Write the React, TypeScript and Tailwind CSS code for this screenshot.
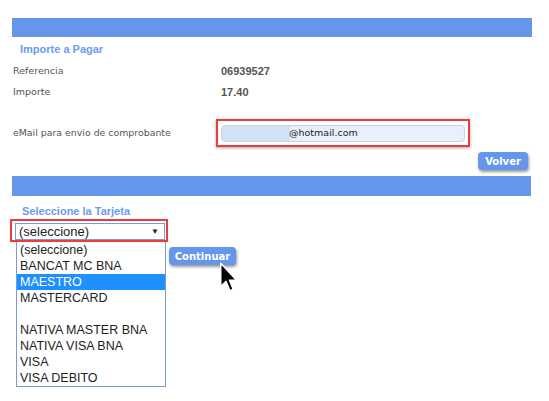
import React from 'react'

const items = [
  '(seleccione)',
  'BANCAT MC BNA',
  'MAESTRO',
  'MASTERCARD',
  '',
  'NATIVA MASTER BNA',
  'NATIVA VISA BNA',
  'VISA',
  'VISA DEBITO',
]

function Cursor() {
  return (
    <svg width="18" height="31" viewBox="0 0 12 20" className="absolute left-[220px] top-[262px]">
      <path d="M0.5 0.5 L0.5 16 L4 12.6 L6.6 18.8 L8.8 17.8 L6.3 11.8 L11 11.8 Z" fill="#000" stroke="#fff" strokeWidth="1" strokeLinejoin="round" />
    </svg>
  )
}

export default function App() {
  return (
    <div className="relative w-[549px] h-[401px] bg-white overflow-hidden font-['DejaVu_Sans',sans-serif] text-[#555]">
      <div className="pt-[18px]">
        <div className="ml-[12px] w-[520px] h-[19px] bg-[#6596ec]"></div>

        <div className="ml-[20px] h-[22px] mt-[1px] flex items-center text-[11px] font-bold text-[#6b9cf0] font-['Liberation_Sans',sans-serif]">
          Importe a Pagar
        </div>

        <div className="flex items-center h-[22px] text-[9.5px]">
          <span className="ml-[13px] w-[208px]">Referencia</span>
          <span className="text-[11px] font-bold text-[#555] font-['Liberation_Sans',sans-serif]">06939527</span>
        </div>
        <div className="flex items-center h-[21px] text-[9.5px]">
          <span className="ml-[13px] w-[208px]">Importe</span>
          <span className="text-[11px] font-bold text-[#555] font-['Liberation_Sans',sans-serif]">17.40</span>
        </div>

        <div className="flex items-center h-[28px] mt-[16px] text-[9.4px]">
          <span className="ml-[13px] w-[203px]">eMail para envio de comprobante</span>
          <div className="w-[254px] h-[28px] border-2 border-[#ee3b3b] shadow-[0_1px_3px_rgba(0,0,0,0.35)] flex items-center px-[3px]">
            <div className="w-full h-[17px] rounded-[4px] border border-[#c9d3e0] bg-[#e8f0fe] flex items-center overflow-hidden">
              <div className="w-[68px] h-full bg-[#d0e2f4]"></div>
              <span className="text-[9.5px] text-[#222] -ml-[1px]">@hotmail.com</span>
            </div>
          </div>
        </div>

        <div className="flex justify-end w-[528px] mt-[5px]">
          <button className="w-[50px] h-[18px] rounded-[4px] bg-[#6596ec] text-white text-[10px] font-bold shadow-[1px_2px_3px_rgba(0,0,0,0.4)] flex items-center justify-center">
            Volver
          </button>
        </div>

        <div className="ml-[12px] mt-[6px] w-[519px] h-[20px] bg-[#6596ec]"></div>

        <div className="ml-[22px] h-[22px] mt-[4px] flex items-center text-[11px] font-bold text-[#6b9cf0] font-['Liberation_Sans',sans-serif]">
          Seleccione la Tarjeta
        </div>

        <div className="flex items-start -mt-[3px]">
          <div className="ml-[10px]">
            <div className="w-[158px] h-[23px] border-2 border-[#ee3b3b] px-[3px] pt-[2px]">
              <div className="w-[150px] h-[17px] border border-[#7a9cd3] bg-white flex items-center justify-between pl-[3px] pr-[5px] font-['Liberation_Sans',sans-serif] text-[13px] text-[#222]">
                <span>(seleccione)</span>
                <span className="text-[8px] text-[#222]">▼</span>
              </div>
            </div>
            <div className="ml-[6px] w-[150px] border border-[#7a9cd3] border-t-0 bg-white font-['Liberation_Sans',sans-serif] text-[12.5px] text-[#222]">
              {items.map((it, i) => (
                <div
                  key={i}
                  className={
                    'h-[16px] leading-[16px] pl-[3px] whitespace-nowrap ' +
                    (it === 'MAESTRO' ? 'bg-[#1e90ff] text-white' : '')
                  }
                >
                  {it}
                </div>
              ))}
            </div>
          </div>
          <button className="ml-[1px] mt-[28px] w-[67px] h-[18px] rounded-[4px] bg-[#6596ec] text-white text-[10px] font-bold shadow-[1px_2px_3px_rgba(0,0,0,0.4)] flex items-center justify-center">
            Continuar
          </button>
        </div>
      </div>
      <Cursor />
    </div>
  )
}
